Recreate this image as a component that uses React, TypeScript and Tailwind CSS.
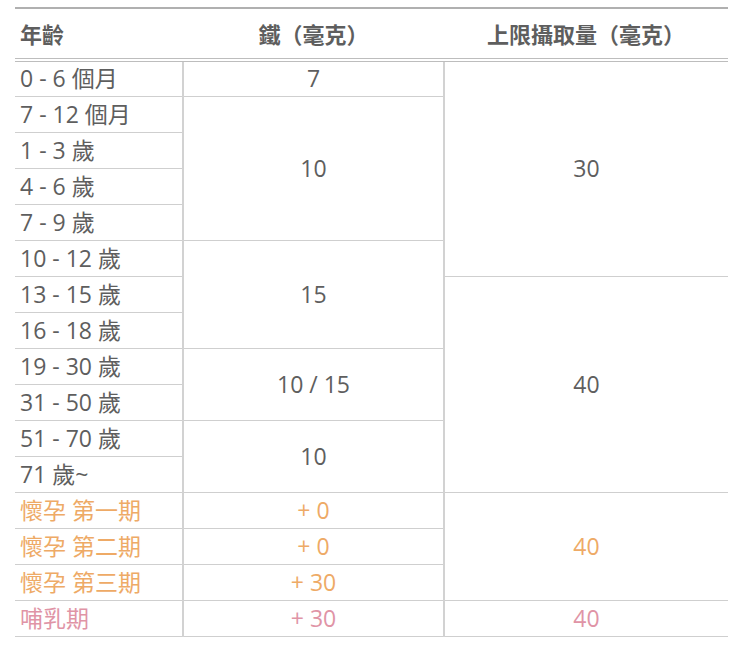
const ageRow = "border-b border-[#cfcfcf] pl-[5px] text-left";
const cell = "border-b border-[#cfcfcf] border-l-2 border-l-[#d2d2d2] text-center";

export default function App() {
  return (
    <div className="bg-white w-[740px] h-[648px] pt-[7px] pl-[15px] font-['Open_Sans','Noto_Sans_CJK_TC',sans-serif] text-[#5e5e5e]">
      <table className="w-[713px] border-collapse table-fixed text-[23px] leading-none">
        <colgroup>
          <col className="w-[168px]" />
          <col className="w-[261px]" />
          <col className="w-[284px]" />
        </colgroup>
        <thead>
          <tr className="h-[52px] border-t-2 border-b-4 border-double border-t-[#b0b0b0] border-b-[#bdbdbd] text-[22px]">
            <th className="text-left pl-[5px] font-semibold">年齡</th>
            <th className="text-center font-semibold">鐵（毫克）</th>
            <th className="text-center font-semibold">上限攝取量（毫克）</th>
          </tr>
        </thead>
        <tbody>
          <tr className="h-[36px]">
            <td className={ageRow}>0 - 6 個月</td>
            <td className={cell}>7</td>
            <td className={cell} rowSpan={6}>30</td>
          </tr>
          <tr className="h-[36px]">
            <td className={ageRow}>7 - 12 個月</td>
            <td className={cell} rowSpan={4}>10</td>
          </tr>
          <tr className="h-[36px]">
            <td className={ageRow}>1 - 3 歲</td>
          </tr>
          <tr className="h-[36px]">
            <td className={ageRow}>4 - 6 歲</td>
          </tr>
          <tr className="h-[36px]">
            <td className={ageRow}>7 - 9 歲</td>
          </tr>
          <tr className="h-[36px]">
            <td className={ageRow}>10 - 12 歲</td>
            <td className={cell} rowSpan={3}>15</td>
          </tr>
          <tr className="h-[36px]">
            <td className={ageRow}>13 - 15 歲</td>
            <td className={cell} rowSpan={6}>40</td>
          </tr>
          <tr className="h-[36px]">
            <td className={ageRow}>16 - 18 歲</td>
          </tr>
          <tr className="h-[36px]">
            <td className={ageRow}>19 - 30 歲</td>
            <td className={cell} rowSpan={2}>10 / 15</td>
          </tr>
          <tr className="h-[36px]">
            <td className={ageRow}>31 - 50 歲</td>
          </tr>
          <tr className="h-[36px]">
            <td className={ageRow}>51 - 70 歲</td>
            <td className={cell} rowSpan={2}>10</td>
          </tr>
          <tr className="h-[36px]">
            <td className={ageRow}>71 歲~</td>
          </tr>
          <tr className="h-[36px] text-[#eeaa66]">
            <td className={ageRow}>懷孕 第一期</td>
            <td className={cell}>+ 0</td>
            <td className={cell} rowSpan={3}>40</td>
          </tr>
          <tr className="h-[36px] text-[#eeaa66]">
            <td className={ageRow}>懷孕 第二期</td>
            <td className={cell}>+ 0</td>
          </tr>
          <tr className="h-[36px] text-[#eeaa66]">
            <td className={ageRow}>懷孕 第三期</td>
            <td className={cell}>+ 30</td>
          </tr>
          <tr className="h-[36px] text-[#e094a6]">
            <td className={ageRow}>哺乳期</td>
            <td className={cell}>+ 30</td>
            <td className={cell}>40</td>
          </tr>
        </tbody>
      </table>
    </div>
  );
}
